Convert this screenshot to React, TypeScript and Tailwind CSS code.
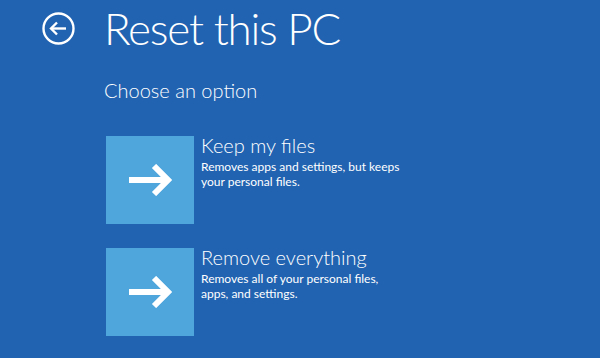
import React from "react";

function Arrow() {
  return (
    <svg width="44" height="32" viewBox="0 0 44 32" fill="none">
      <path d="M1 16H40" stroke="white" strokeWidth="6" />
      <path d="M26 2L40 16L26 30" stroke="white" strokeWidth="6" strokeLinejoin="miter" />
    </svg>
  );
}

function Option({ title, lines }: { title: string; lines: string[] }) {
  return (
    <div className="flex">
      <div className="w-[88px] h-[88px] bg-[#4ea6dc] flex items-center justify-center">
        <Arrow />
      </div>
      <div className="ml-[7px] -mt-[3px]">
        <div className="text-[20px] leading-[24px] font-light text-white">{title}</div>
        <div className="mt-[2px] text-[12px] leading-[15px] text-white">
          {lines.map((l) => (
            <div key={l}>{l}</div>
          ))}
        </div>
      </div>
    </div>
  );
}

export default function App() {
  return (
    <div
      className="w-[600px] h-[358px] overflow-hidden bg-[#2163b1] text-white"
      style={{ fontFamily: 'Lato, "Open Sans", sans-serif' }}
    >
      <div className="flex items-center pt-[5px] pl-[42px]">
        <svg width="33" height="33" viewBox="0 0 33 33" fill="none">
          <circle cx="16.5" cy="16.5" r="15" stroke="white" strokeWidth="2.4" />
          <path d="M9 16.5H24" stroke="white" strokeWidth="2.4" />
          <path d="M15 10.5L9 16.5L15 22.5" stroke="white" strokeWidth="2.4" />
        </svg>
        <div className="ml-[29px] text-[44px] leading-[46px] font-light tracking-[-1.2px]">Reset this PC</div>
      </div>
      <div className="pl-[104px] mt-[27px] text-[20px] leading-[24px] font-light">Choose an option</div>
      <div className="pl-[106px] mt-[34px] flex flex-col gap-[24px]">
        <Option title="Keep my files" lines={["Removes apps and settings, but keeps", "your personal files."]} />
        <Option title="Remove everything" lines={["Removes all of your personal files,", "apps, and settings."]} />
      </div>
    </div>
  );
}
